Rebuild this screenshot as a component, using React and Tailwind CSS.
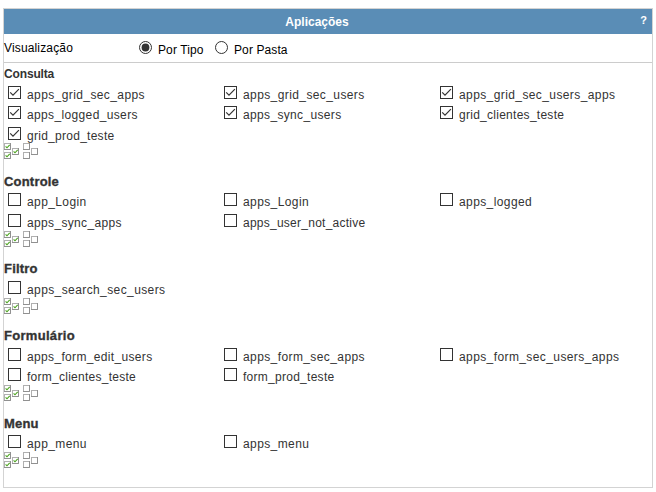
const GROUPS = [
  {
    title: "Consulta",
    titleClass: "h-5 text-[12px] tracking-[-0.15px]",
    footer: "h-[31px]",
    rows: [
      { h: "h-5", items: ["apps_grid_sec_apps", "apps_grid_sec_users", "apps_grid_sec_users_apps"] },
      { h: "h-[21px]", items: ["apps_logged_users", "apps_sync_users", "grid_clientes_teste"] },
      { h: "h-4", items: ["grid_prod_teste"] },
    ],
    checked: true,
  },
  {
    title: "Controle",
    titleClass: "h-[19px] text-[13px] tracking-[0.2px] [-webkit-text-stroke:0.35px_#333]",
    footer: "h-[30px]",
    rows: [
      { h: "h-[21px]", items: ["app_Login", "apps_Login", "apps_logged"] },
      { h: "h-[17px]", items: ["apps_sync_apps", "apps_user_not_active"] },
    ],
  },
  {
    title: "Filtro",
    titleClass: "h-5 text-[13px] tracking-[0.2px] [-webkit-text-stroke:0.35px_#333]",
    footer: "h-[30px]",
    rows: [{ h: "h-[17px]", items: ["apps_search_sec_users"] }],
  },
  {
    title: "Formulário",
    titleClass: "h-5 text-[13px] tracking-[0.3px] [-webkit-text-stroke:0.35px_#333]",
    footer: "h-[31px]",
    rows: [
      { h: "h-5", items: ["apps_form_edit_users", "apps_form_sec_apps", "apps_form_sec_users_apps"] },
      { h: "h-[17px]", items: ["form_clientes_teste", "form_prod_teste"] },
    ],
  },
  {
    title: "Menu",
    titleClass: "h-[19px] text-[13px] tracking-[0.2px] [-webkit-text-stroke:0.35px_#333]",
    footer: "h-4",
    rows: [{ h: "h-[17px]", items: ["app_menu", "apps_menu"] }],
  },
];

const TRACKING = {
  apps_logged_users: "tracking-[0.36px]",
  apps_sync_users: "tracking-[0.34px]",
  apps_sync_apps: "tracking-[0.34px]",
  grid_clientes_teste: "tracking-[0.27px]",
  grid_prod_teste: "tracking-[0.27px]",
  apps_user_not_active: "tracking-[0.25px]",
  apps_form_edit_users: "tracking-[0.34px]",
  form_clientes_teste: "tracking-[0.26px]",
  form_prod_teste: "tracking-[0.27px]",
};

function Checkbox({ checked }) {
  return (
    <svg className="block h-[13px] w-[13px] shrink-0" viewBox="0 0 13 13" fill="none">
      <rect x="0.5" y="0.5" width="12" height="12" fill="#fff" stroke="#333" />
      {checked && <path d="M2.2 6.3L5 9.1L10.9 3.2" stroke="#333" strokeWidth="1.2" />}
    </svg>
  );
}

function Radio({ checked }) {
  return (
    <svg className="block h-[13px] w-[13px] shrink-0" viewBox="0 0 13 13" fill="none">
      <circle cx="6.5" cy="6.5" r="6" fill="#fff" stroke="#333" />
      {checked && <circle cx="6.5" cy="6.5" r="3.9" fill="#333" />}
    </svg>
  );
}

const BOXES = [[0, 0], [0, 9], [8, 5]];

function BoxCluster({ checked }) {
  return (
    <svg className="block h-4 w-[15px] shrink-0" viewBox="0 0 15 16" fill="none">
      {BOXES.map(([x, y]) => (
        <g key={`${x}-${y}`}>
          <rect x={x + 0.5} y={y + 0.5} width="6" height="6" fill="#fff" stroke="#b0b0b0" />
          <path d={`M${x + 6.5} ${y}V${y + 6.5}H${x}`} stroke="#909090" />
          {checked && (
            <path d={`M${x + 1.6} ${y + 3.3}l1.4 1.5l2.7 -3`} stroke="#4ca31f" strokeWidth="1.1" />
          )}
        </g>
      ))}
    </svg>
  );
}

function Group({ group }) {
  return (
    <section>
      <h2 className={`font-bold leading-4 ${group.titleClass}`}>{group.title}</h2>
      {group.rows.map((row) => (
        <div key={row.items[0]} className={`grid grid-cols-[216px_216px_208px] pl-1 ${row.h}`}>
          {row.items.map((name) => (
            <label key={name} className="flex items-start gap-1.5">
              <Checkbox checked={group.checked} />
              <span className={`mt-px whitespace-nowrap leading-4 ${TRACKING[name] ?? "tracking-[0.4px]"}`}>
                {name}
              </span>
            </label>
          ))}
        </div>
      ))}
      <div className={`flex items-start gap-1 ${group.footer}`}>
        <BoxCluster checked />
        <BoxCluster />
      </div>
    </section>
  );
}

export default function App() {
  return (
    <div className="h-[492px] w-[656px] overflow-hidden bg-white pl-[3px] pt-2 font-['Liberation_Sans',Arial,sans-serif] text-[12px] text-[#333]">
      <main className="h-[480px] w-[650px] border border-[#d3d3d3]">
        <header className="grid h-[25px] grid-cols-[20px_1fr_20px] bg-[#5a8db6] font-bold text-white">
          <h1 className="col-start-2 -ml-[22px] text-center leading-[26px]">Aplicações</h1>
          <span className="pl-[3px] text-center text-[11px] leading-[22px]">?</span>
        </header>
        <div className="flex h-[29px] items-start border-b border-[#ccc] text-black">
          <span className="mt-[6px] w-[135px] leading-4 tracking-[0.15px]">Visualização</span>
          <label className="mt-[7px] flex w-[76px] gap-1.5">
            <Radio checked />
            <span className="mt-px whitespace-nowrap leading-4 tracking-[0.1px]">Por Tipo</span>
          </label>
          <label className="mt-[7px] flex gap-1.5">
            <Radio />
            <span className="mt-px whitespace-nowrap leading-4 tracking-[0.1px]">Por Pasta</span>
          </label>
        </div>
        <div className="pt-[3px]">
          {GROUPS.map((group) => (
            <Group key={group.title} group={group} />
          ))}
        </div>
      </main>
    </div>
  );
}
